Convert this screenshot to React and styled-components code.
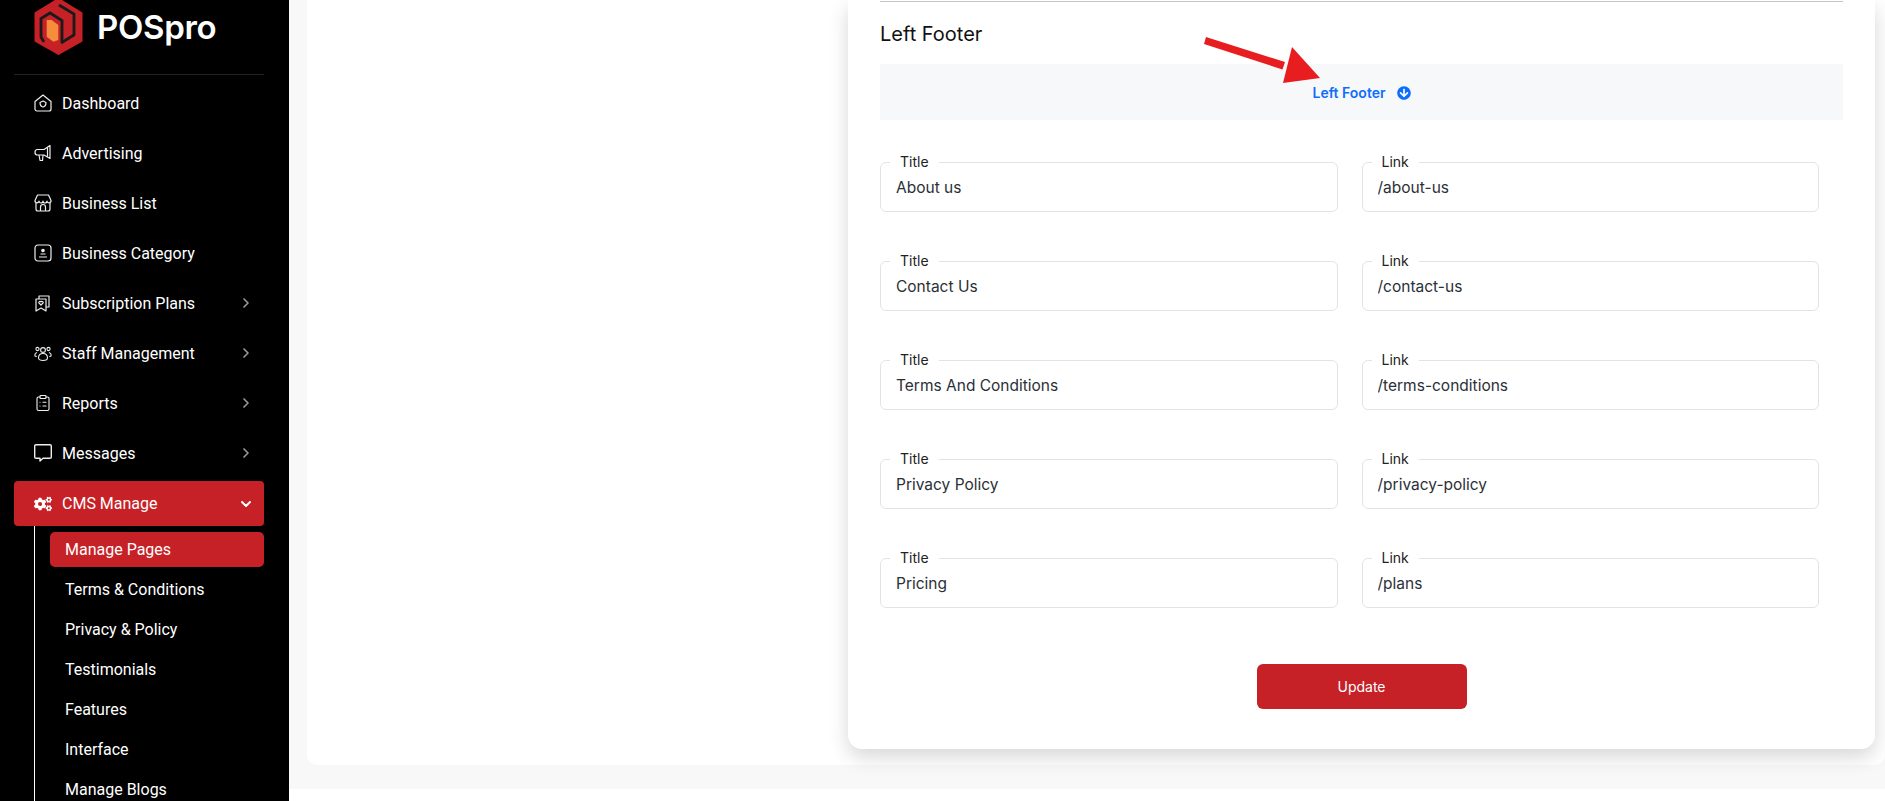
import React from "react";
import styled, { createGlobalStyle } from "styled-components";
import { ChevronDown, ChevronRight, ClipboardList } from "lucide-react";
import { FaArrowCircleDown, FaCogs } from "react-icons/fa";

const GlobalStyle = createGlobalStyle`
  html, body {
    margin: 0;
    padding: 0;
    background: #fff;
    overflow: hidden;
  }
  * { box-sizing: border-box; }
`;

const Page = styled.div`
  display: flex;
  height: 801px;
  overflow: hidden;
  font-family: Inter, "Liberation Sans", sans-serif;
`;

const Sidebar = styled.aside`
  flex: 0 0 289px;
  background: #000;
  color: #fff;
  font-family: Roboto, "Liberation Sans", sans-serif;
  overflow: hidden;
`;

const Brand = styled.div`
  display: flex;
  align-items: center;
  gap: 14px;
  height: 75px;
  padding: 0 0 20px 20px;
  margin: 0 25px 0 14px;
  border-bottom: 1px solid #222;
`;

const BrandName = styled.span`
  font-family: Inter, sans-serif;
  font-size: 33px;
  font-weight: 600;
  letter-spacing: -0.3px;
`;

const Menu = styled.nav`
  display: flex;
  flex-direction: column;
  padding: 3px 25px 0 14px;
`;

const MenuItem = styled.div`
  display: flex;
  align-items: center;
  height: ${(props) => (props.$active ? "45px" : "50px")};
  margin: ${(props) => (props.$active ? "3px 0 0" : "0")};
  padding: 0 20px;
  gap: 10px;
  border-radius: 4px;
  font-size: 16px;
  background: ${(props) => (props.$active ? "#c62127" : "transparent")};
`;

const IconSlot = styled.span`
  display: flex;
  align-items: center;
  justify-content: center;
  width: 18px;
  height: 18px;
  color: #eee;
`;

const MenuLabel = styled.span`
  flex: 1;
`;

const Arrow = styled.span`
  display: flex;
  margin-right: -10px;
  color: ${(props) => (props.$active ? "#fff" : "#999")};
`;

const SubMenu = styled.div`
  display: flex;
  flex-direction: column;
  margin-left: 20px;
  padding: 6px 0 0 15px;
  border-left: 1px solid #fff;
`;

const SubItem = styled.div`
  display: flex;
  align-items: center;
  height: 35px;
  margin-bottom: 5px;
  padding-left: 15px;
  border-radius: 5px;
  font-size: 16px;
  background: ${(props) => (props.$active ? "#c62127" : "transparent")};
`;

const Main = styled.main`
  flex: 1;
  height: 789px;
  padding-left: 18px;
  background: #f8f8f8;
`;

const Panel = styled.section`
  display: flex;
  justify-content: flex-end;
  height: 765px;
  padding-right: 10px;
  background: #fff;
  border-radius: 0 0 10px 10px;
`;

const Card = styled.div`
  position: relative;
  width: 1027px;
  height: 749px;
  padding: 0 32px;
  background: #fff;
  border-radius: 0 0 14px 14px;
  box-shadow: 0 8px 20px rgba(0, 0, 0, 0.16);
`;

const Rule = styled.hr`
  margin: 0;
  height: 2px;
  border: 0;
  border-bottom: 1px solid #c4c4c4;
`;

const Heading = styled.h2`
  margin: 19px 0 0;
  height: 43px;
  font-size: 20px;
  line-height: 26px;
  font-weight: 400;
  color: #111;
`;

const Strip = styled.div`
  display: flex;
  align-items: center;
  justify-content: center;
  gap: 11px;
  height: 56px;
  padding-top: 1px;
  background: #f7f8fa;
  color: #0d6efd;
  font-size: 14px;
  font-weight: 600;
`;

const Rows = styled.div`
  display: flex;
  flex-direction: column;
  gap: 40px;
  margin-top: 33px;
  padding-right: 24px;
`;

const Row = styled.div`
  display: grid;
  grid-template-columns: 1fr 1fr;
  gap: 24px;
`;

const Field = styled.fieldset`
  margin: 0;
  height: 59px;
  padding: 0 15px;
  border: 1px solid #e3e3e3;
  border-radius: 6px;
  min-width: 0;
`;

const Legend = styled.legend`
  margin-left: -6px;
  padding: 0 10px;
  font-size: 14px;
  line-height: 18px;
  color: #222;
`;

const Input = styled.input`
  display: block;
  width: 100%;
  height: 32px;
  padding: 0;
  border: 0;
  outline: 0;
  background: transparent;
  font-family: inherit;
  font-size: 15.5px;
  color: #2b2f36;
`;

const Actions = styled.div`
  display: flex;
  justify-content: center;
  margin-top: 56px;
`;

const UpdateButton = styled.button`
  width: 210px;
  height: 45px;
  border: 0;
  border-radius: 6px;
  background: #c62127;
  color: #fff;
  font-family: inherit;
  font-size: 14px;
`;

const Annotation = styled.svg`
  position: absolute;
  left: 340px;
  top: 30px;
  pointer-events: none;
`;

const Logo = () => (
  <svg width="49" height="55" viewBox="0 0 49 55">
    <path
      d="M24.500 -1 47.500 13V41L24.500 54 1.500 41V13Z"
      fill="#c62127"
      stroke="#c62127"
      strokeWidth="2"
      strokeLinejoin="round"
    />
    <path
      d="M10 42 7 37V18.500L16 13 28 20.500V42"
      fill="none"
      stroke="#1a1a1a"
      strokeWidth="2.800"
    />
    <path d="M25 5 40 14V35L27 43" fill="none" stroke="#1a1a1a" strokeWidth="2.800" />
    <path d="M12.700 20H17.700L24.300 25V40L19.300 41.700 12.700 36.700Z" fill="#f68d3c" />
  </svg>
);

const HomeIcon = () => (
  <svg width="18" height="18" viewBox="0 0 18 18" fill="none" stroke="currentColor" strokeWidth="1.2" strokeLinejoin="round">
    <path d="M1 7.500 9 1l8 6.500v7.500a2 2 0 0 1-2 2H3a2 2 0 0 1-2-2Z" />
    <path d="M6 8.500 9 7l3 1.500c0 2.500-1 4-3 4.500-2-.5-3-2-3-4.500Z" />
  </svg>
);

const MegaphoneIcon = () => (
  <svg width="18" height="18" viewBox="0 0 18 18" fill="none" stroke="currentColor" strokeWidth="1.2" strokeLinejoin="round">
    <path d="M3 5.500h7L16 1.500v13L10 11H3a2.500 2.500 0 0 1-2-2.700A2.700 2.700 0 0 1 3 5.500Z" />
    <path d="M13.500 3.200v9.600" />
    <path d="M5 11l1 5.500h2.500L9 11" />
  </svg>
);

const StoreIcon = () => (
  <svg width="18" height="18" viewBox="0 0 18 18" fill="none" stroke="currentColor" strokeWidth="1.2" strokeLinejoin="round">
    <path d="M3.500 1h11L17 6.500a2 2 0 0 1-4 .5 2 2 0 0 1-4 0 2 2 0 0 1-4 0 2 2 0 0 1-4-.5Z" />
    <path d="M2 9v6a2 2 0 0 0 2 2h10a2 2 0 0 0 2-2V9" />
    <path d="M6.500 17v-4a2.500 2.500 0 0 1 5 0v4" />
  </svg>
);

const CategoryIcon = () => (
  <svg width="18" height="18" viewBox="0 0 18 18" fill="none" stroke="currentColor" strokeWidth="1.2">
    <rect x="1" y="1" width="16" height="16" rx="3" />
    <circle cx="9" cy="6.500" r="1.200" fill="currentColor" />
    <path d="M6.500 10h5M5 13h8" />
  </svg>
);

const PlansIcon = () => (
  <svg width="18" height="18" viewBox="0 0 18 18" fill="none" stroke="currentColor" strokeWidth="1.2" strokeLinejoin="round">
    <path d="M2 5h10v12l-5-3-5 3Z" />
    <path d="M5 5V2h10v11h-3" />
    <path d="M7 11 4.800 8.800a1.300 1.300 0 0 1 2.200-1 1.300 1.300 0 0 1 2.200 1Z" />
  </svg>
);

const StaffIcon = () => (
  <svg width="18" height="18" viewBox="0 0 18 18" fill="none" stroke="currentColor" strokeWidth="1.100">
    <circle cx="9" cy="6" r="2.400" />
    <circle cx="3.500" cy="5" r="1.600" />
    <circle cx="14.500" cy="5" r="1.600" />
    <path d="M4.500 14c0-3 2-4.500 4.500-4.500s4.500 1.500 4.500 4.500c0 1.500-2 2.500-4.500 2.500S4.500 15.500 4.500 14Z" />
    <path d="M3 8.500C1.500 9 .8 10 .8 11.200c0 .8.700 1.300 2 1.300M15 8.500c1.500.5 2.200 1.500 2.200 2.700 0 .8-.7 1.300-2 1.300" />
  </svg>
);

const MessageIcon = () => (
  <svg width="18" height="18" viewBox="0 0 18 18" fill="none" stroke="currentColor" strokeWidth="1.400" strokeLinejoin="round" style={{ overflow: "visible" }}>
    <path d="M2 .7h14A1.300 1.300 0 0 1 17.300 2v11a1.300 1.300 0 0 1-1.300 1.300H9L6 17v-2.700H2A1.300 1.300 0 0 1 .7 13V2A1.300 1.300 0 0 1 2 .7Z" />
  </svg>
);

const primaryMenu = [
  { label: "Dashboard", icon: <HomeIcon /> },
  { label: "Advertising", icon: <MegaphoneIcon /> },
  { label: "Business List", icon: <StoreIcon /> },
  { label: "Business Category", icon: <CategoryIcon /> },
  { label: "Subscription Plans", icon: <PlansIcon />, more: true },
  { label: "Staff Management", icon: <StaffIcon />, more: true },
  { label: "Reports", icon: <ClipboardList size={18} strokeWidth={1.5} />, more: true },
  { label: "Messages", icon: <MessageIcon />, more: true },
];

const subMenu = [
  "Manage Pages",
  "Terms & Conditions",
  "Privacy & Policy",
  "Testimonials",
  "Features",
  "Interface",
  "Manage Blogs",
];

const footerLinks = [
  ["About us", "/about-us"],
  ["Contact Us", "/contact-us"],
  ["Terms And Conditions", "/terms-conditions"],
  ["Privacy Policy", "/privacy-policy"],
  ["Pricing", "/plans"],
];

export default function App() {
  return (
    <Page>
      <GlobalStyle />
      <Sidebar>
        <Brand>
          <Logo />
          <BrandName>POSpro</BrandName>
        </Brand>
        <Menu>
          {primaryMenu.map((item) => (
            <MenuItem key={item.label}>
              <IconSlot>{item.icon}</IconSlot>
              <MenuLabel>{item.label}</MenuLabel>
              {item.more && (
                <Arrow>
                  <ChevronRight size={16} strokeWidth={2.5} />
                </Arrow>
              )}
            </MenuItem>
          ))}
          <MenuItem $active>
            <IconSlot>
              <FaCogs size={18} color="#fff" />
            </IconSlot>
            <MenuLabel>CMS Manage</MenuLabel>
            <Arrow $active>
              <ChevronDown size={16} strokeWidth={3} />
            </Arrow>
          </MenuItem>
          <SubMenu>
            {subMenu.map((label, i) => (
              <SubItem key={label} $active={i === 0}>
                {label}
              </SubItem>
            ))}
          </SubMenu>
        </Menu>
      </Sidebar>
      <Main>
        <Panel>
          <Card>
            <Rule />
            <Heading>Left Footer</Heading>
            <Strip>
              Left Footer
              <FaArrowCircleDown size={14} />
            </Strip>
            <Annotation width="134" height="60" viewBox="0 0 134 60">
              <path d="M18 7 97 32l-2.500 7.500L16 14Z" fill="#e71d20" />
              <path d="M104 17 132 48 95 53Z" fill="#e71d20" />
            </Annotation>
            <Rows>
              {footerLinks.map(([title, link]) => (
                <Row key={link}>
                  <Field>
                    <Legend>Title</Legend>
                    <Input readOnly value={title} />
                  </Field>
                  <Field>
                    <Legend>Link</Legend>
                    <Input readOnly value={link} />
                  </Field>
                </Row>
              ))}
            </Rows>
            <Actions>
              <UpdateButton>Update</UpdateButton>
            </Actions>
          </Card>
        </Panel>
      </Main>
    </Page>
  );
}
